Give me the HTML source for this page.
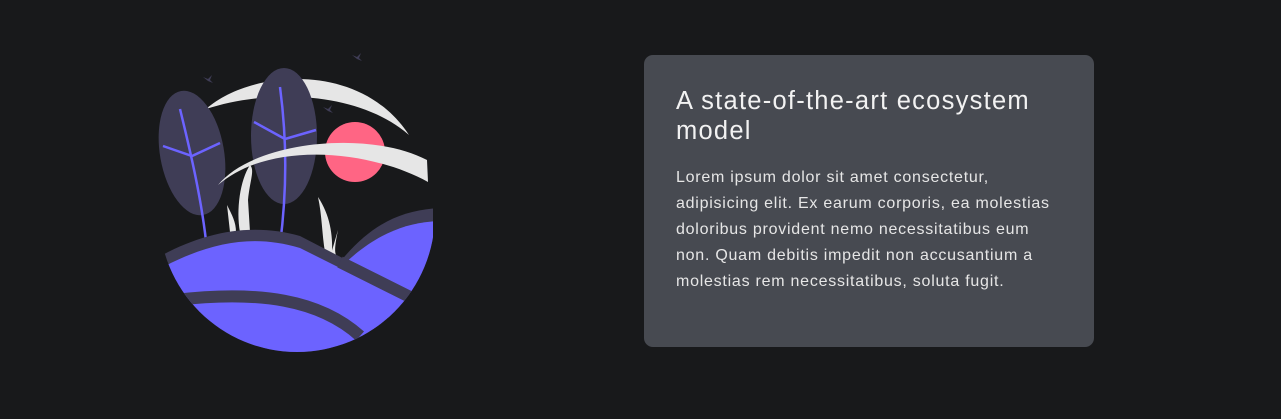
<!DOCTYPE html>
<html><head><meta charset="utf-8"><style>
html,body{margin:0;padding:0;background:#18191b;width:1281px;height:419px;overflow:hidden}
.card{position:absolute;left:644px;top:55px;width:450px;height:292px;background:#474a51;border-radius:9px}
h2{position:absolute;left:32px;top:31px;margin:0;font:400 25.5px/30px "Liberation Sans",sans-serif;color:#f2f2f2;letter-spacing:1.25px;white-space:nowrap}
p{position:absolute;left:32px;top:110px;margin:0;font:400 16px/26px "Liberation Sans",sans-serif;color:#e6e6e6;letter-spacing:0.75px;white-space:nowrap}
svg{position:absolute;left:0;top:0}
</style></head><body>
<svg width="640" height="419" viewBox="0 0 640 419">
<defs><clipPath id="c"><circle cx="297" cy="214" r="138"/></clipPath>
<clipPath id="r"><rect x="0" y="0" width="433" height="419"/></clipPath></defs>
<path d="M206,109 C250,70 360,60 409,135 C360,92 270,88 206,109Z" fill="#e6e6e6"/>
<circle cx="355" cy="152" r="30" fill="#ff6584"/>
<g fill="#3f3d56">
<path d="M203,77 l5,2 4,-4 -2,5 3,3 -5,-2z"/><path d="M352,55 l5,2 4,-4 -2,5 3,3 -5,-2z"/><path d="M323,107 l5,2 4,-4 -2,5 3,3 -5,-2z"/>
</g>
<g fill="#e6e6e6">
<path d="M227,205 C232,215 236,222 236,232 L230,232 Z"/>
<path d="M248,200 C250,180 255,170 250,165 C240,180 236,210 240,232 L250,232 Z"/>
<path d="M318,197 C330,215 333,235 332,254 L325,252 C322,235 322,215 318,197Z"/>
<path d="M338,230 C336,240 334,250 336,255 L331,254 Z"/>
</g>
<ellipse cx="192" cy="153" rx="32" ry="63" transform="rotate(-10 192 153)" fill="#3f3d56"/>
<ellipse cx="284" cy="136" rx="33" ry="68" fill="#3f3d56"/>
<g fill="none" stroke="#6c63ff" stroke-width="2.5">
<path d="M180,109 C190,150 202,200 207,250"/>
<path d="M163,146 L192,156 L220,143"/>
<path d="M280,87 C287,140 287,190 280,245"/>
<path d="M254,122 L285,139 L316,130"/>
</g>
<path d="M218,185 C255,140 370,130 427,160 L428,182 C370,150 270,140 218,185Z" fill="#e6e6e6"/>
<g clip-path="url(#c)"><g clip-path="url(#r)">
<path d="M340,262 C370,225 400,210 440,208 L440,420 L340,420Z" fill="#3f3d56"/>
<path d="M344,264 C375,235 405,222 440,221 L440,420 L344,420Z" fill="#6c63ff"/>
<path d="M150,262 C200,232 250,222 300,236 L420,298 L420,420 L150,420Z" fill="#3f3d56"/>
<path d="M150,274 C205,243 250,233 300,248 L410,303 L440,310 L440,420 L150,420Z" fill="#6c63ff"/>
<path d="M340,262 L420,302" stroke="#3f3d56" stroke-width="12" fill="none"/>
<path d="M175,300 C260,290 320,300 360,336" stroke="#3f3d56" stroke-width="12" fill="none"/>
</g></g>
</svg>
<div class="card">
<h2>A state-of-the-art ecosystem<br>model</h2>
<p>Lorem ipsum dolor sit amet consectetur,<br>adipisicing elit. Ex earum corporis, ea molestias<br>doloribus provident nemo necessitatibus eum<br>non. Quam debitis impedit non accusantium a<br>molestias rem necessitatibus, soluta fugit.</p>
</div>
</body></html>
